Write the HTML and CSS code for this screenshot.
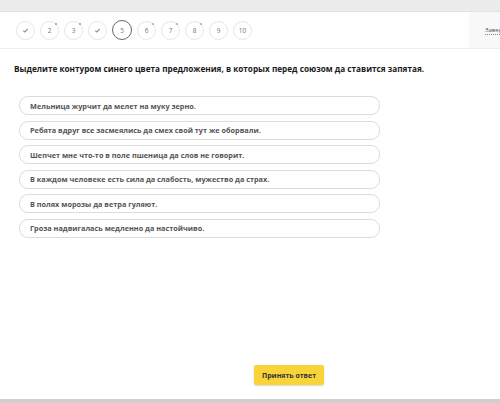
FILE: index.html
```html
<!DOCTYPE html>
<html lang="ru">
<head>
<meta charset="utf-8">
<link rel="stylesheet" href="styles.css">
</head>
<body>
<div class="topbar"></div>
<header class="header">
  <nav class="steps">
    <span class="step"><svg class="chk" viewBox="0 0 8 8" width="7" height="7"><path d="M1.5 4.2 L3.2 5.8 L6.5 2.2" fill="none" stroke="#888" stroke-width="1.2"/></svg></span>
    <span class="step">2<i class="mark red"></i></span>
    <span class="step">3<i class="mark red"></i></span>
    <span class="step"><svg class="chk" viewBox="0 0 8 8" width="7" height="7"><path d="M1.5 4.2 L3.2 5.8 L6.5 2.2" fill="none" stroke="#888" stroke-width="1.2"/></svg></span>
    <span class="step current">5</span>
    <span class="step">6<i class="mark"></i></span>
    <span class="step">7<i class="mark"></i></span>
    <span class="step">8<i class="mark"></i></span>
    <span class="step">9</span>
    <span class="step">10</span>
  </nav>
  <div class="side"><span class="finish">Завершить</span></div>
</header>
<main class="main">
  <h1 class="question">Выделите контуром синего цвета предложения, в которых перед союзом да ставится запятая.</h1>
  <ul class="options">
    <li class="option">Мельница журчит да мелет на муку зерно.</li>
    <li class="option">Ребята вдруг все засмеялись да смех свой тут же оборвали.</li>
    <li class="option">Шепчет мне что-то в поле пшеница да слов не говорит.</li>
    <li class="option">В каждом человеке есть сила да слабость, мужество да страх.</li>
    <li class="option">В полях морозы да ветра гуляют.</li>
    <li class="option">Гроза надвигалась медленно да настойчиво.</li>
  </ul>
  <div class="actions"><button class="submit">Принять ответ</button></div>
</main>
<div class="bottombar"></div>
</body>
</html>
```
FILE: styles.css
```css
* { box-sizing: border-box; }
html, body { margin: 0; padding: 0; }
body {
  width: 500px;
  height: 403px;
  overflow: hidden;
  background: #fff;
  font-family: "Open Sans", "Liberation Sans", sans-serif;
  color: #222;
  display: flex;
  flex-direction: column;
}
.topbar {
  height: 12px;
  background: #ececec;
  border-bottom: 1px solid #e2e2e2;
}
.header {
  height: 37px;
  display: flex;
  border-bottom: 1px solid #ececec;
}
.steps {
  flex: 1;
  display: flex;
  align-items: center;
  gap: 5px;
  padding-left: 16px;
}
.step {
  position: relative;
  width: 19px;
  height: 19px;
  border: 1px solid #e6e6e6;
  border-radius: 50%;
  display: flex;
  align-items: center;
  justify-content: center;
  font-size: 6.5px;
  color: #777;
}
.step.current {
  width: 20px;
  height: 20px;
  border-color: #666;
}
.mark {
  position: absolute;
  top: 1px;
  right: 1px;
  width: 2px;
  height: 2px;
  border-radius: 50%;
  background: #aaa;
}
.mark.red { background: #e07a7a; }
.side {
  width: 31px;
  background: #f8f8f8;
  display: flex;
  align-items: center;
  padding-left: 16px;
  overflow: hidden;
}
.finish {
  font-size: 6px;
  color: #555;
  white-space: nowrap;
  border-bottom: 1px dotted #888;
}
.main {
  flex: 1;
  display: flex;
  flex-direction: column;
  padding: 14px 0 0 14px;
}
.question {
  margin: 0;
  font-size: 8.2px;
  font-weight: 700;
  color: #1a1a1a;
  line-height: 12px;
}
.options {
  list-style: none;
  margin: 21px 0 0 5px;
  padding: 0;
  display: flex;
  flex-direction: column;
  gap: 5.6px;
}
.option {
  width: 361px;
  height: 19px;
  border: 1.5px solid #dcdcdc;
  border-radius: 9px;
  display: flex;
  align-items: center;
  padding-left: 10px;
  font-size: 7.3px;
  font-weight: 700;
  color: #555;
}
.actions {
  margin-top: auto;
  display: flex;
  justify-content: center;
  padding: 0 0 14px 64px;
}
.submit {
  width: 70px;
  height: 20px;
  border: none;
  border-radius: 2px;
  background: #f8d43a;
  box-shadow: 0 1px 2px rgba(0,0,0,0.15);
  font-family: "Open Sans", "Liberation Sans", sans-serif;
  font-size: 7px;
  font-weight: 700;
  color: #333;
  padding: 0;
}
.bottombar {
  height: 4px;
  background: #cfcfcf;
}
```
